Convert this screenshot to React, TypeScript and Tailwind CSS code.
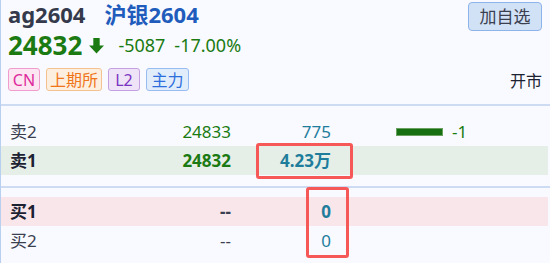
import React from 'react'

const font = { fontFamily: '"Noto Sans", "Noto Sans CJK SC", sans-serif' }

const tags = [
  { text: 'CN', cls: 'w-[32px] bg-[#fce6f2] border-[#f09ccc] text-[#de2a9c]' },
  { text: '上期所', cls: 'w-[56px] bg-[#fdefdf] border-[#f4c290] text-[#f07418]' },
  { text: 'L2', cls: 'w-[32px] bg-[#efe3f7] border-[#c4a0e2] text-[#7a34c2]' },
  { text: '主力', cls: 'w-[43px] bg-[#e2edfc] border-[#98bcf0] text-[#2c6fdc]' },
]

function DownArrow() {
  return (
    <svg width="17" height="17" viewBox="0 0 16 16" className="ml-[6px]">
      <path d="M5 1h6v7h4l-7 7.5L1 8h4z" fill="#1b7a12" />
    </svg>
  )
}

function BookRow({ label, price, vol, bold, bg, children }: {
  label: string
  price: string
  vol: string
  bold?: boolean
  bg?: string
  children?: React.ReactNode
}) {
  return (
    <div className={`flex items-center h-[29px] ${bg ?? ''}`}>
      <div className={`w-[60px] pl-[9px] text-[17px] ${bold ? 'font-bold text-[#1c2232]' : 'text-[#3a4050]'}`}>{label}</div>
      <div className={`w-[170px] text-right text-[17px] ${price === '--' ? 'text-[#3a4050]' : 'text-[#1b7a12]'} ${bold ? 'font-bold' : ''}`}>{price}</div>
      <div className={`w-[100px] text-right text-[17px] text-[#1f7d9c] ${bold ? 'font-bold' : ''}`}>{vol}</div>
      <div className="flex items-center pl-[65px]">{children}</div>
    </div>
  )
}

export default function App() {
  return (
    <div style={font} className="relative w-[550px] h-[263px] bg-[#f8faff] border-l border-[#b8cff0] overflow-hidden">
      <div className="px-[7px]">
        <div className="flex items-start justify-between h-[31px]">
          <div className="flex items-center gap-[19px] text-[22px] font-bold leading-none pt-[3px]">
            <span className="text-[#343a4c]">ag2604</span>
            <span className="text-[#1f5cbc]">沪银2604</span>
          </div>
          <button className="h-[29px] w-[74px] mt-[2px] mr-[1px] rounded-[4px] bg-[#d2e2f6] border border-[#8eb3ea] text-[17px] text-[#3a4050]">加自选</button>
        </div>
        <div className="flex items-center h-[28px] text-[#1b7a12]">
          <span className="text-[26px] font-bold leading-none">24832</span>
          <DownArrow />
          <span className="ml-[13px] text-[18px] leading-none">-5087</span>
          <span className="ml-[9px] text-[18px] leading-none">-17.00%</span>
        </div>
        <div className="flex items-center justify-between mt-[9px] h-[23px]">
          <div className="flex items-center gap-[6px]">
            {tags.map(t => (
              <span key={t.text} className={`h-[23px] flex items-center justify-center rounded-[3px] border text-[16px] ${t.cls}`}>{t.text}</span>
            ))}
          </div>
          <span className="text-[16px] text-[#1c2232] mt-[2px] mr-[1px]">开市</span>
        </div>
      </div>
      <div className="mt-[13px] h-[2px] bg-[#cddcf3]" />
      <div className="pt-[11px]">
        <BookRow label="卖2" price="24833" vol="775">
          <div className="w-[47px] h-[8px] bg-[#167012] border border-[#6aa060]" />
          <span className="ml-[9px] text-[17px] text-[#1b7a12]">-1</span>
        </BookRow>
        <BookRow label="卖1" price="24832" vol="4.23万" bold bg="bg-[#e5efe8] mr-[2px]" />
      </div>
      <div className="mt-[11px] h-[2px] bg-[#cddcf3]" />
      <div className="pt-[9px]">
        <BookRow label="买1" price="--" vol="0" bold bg="bg-[#f8e6eb] mr-[2px]" />
        <BookRow label="买2" price="--" vol="0" />
      </div>
      <div className="absolute left-[255px] top-[143px] w-[97px] h-[36px] border-[3px] border-[#f65858] rounded-[3px]" />
      <div className="absolute left-[305px] top-[187px] w-[43px] h-[71px] border-[3px] border-[#f65858] rounded-[3px]" />
    </div>
  )
}
